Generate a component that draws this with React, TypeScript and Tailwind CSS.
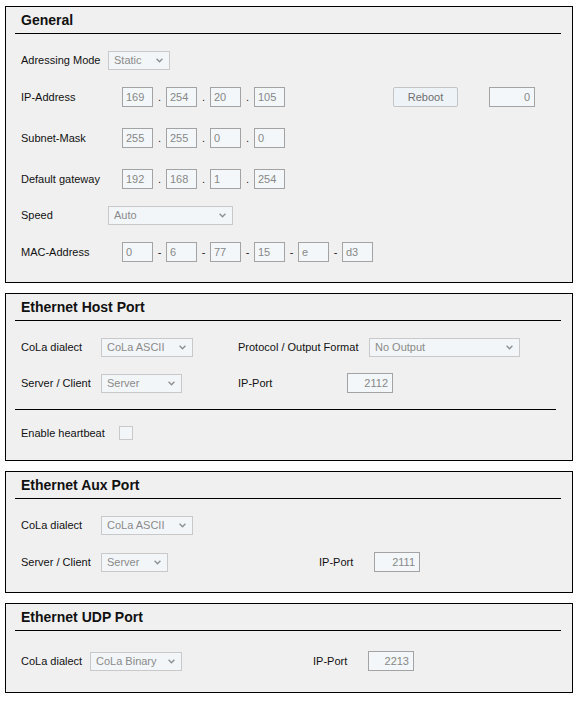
import React from "react";

const Chevron = () => (
  <svg width="7" height="5" viewBox="0 0 7 5" className="shrink-0">
    <path d="M0.6 0.8 L3.5 3.8 L6.4 0.8" fill="none" stroke="#8f8f8f" strokeWidth="1.4" />
  </svg>
);

const Select = ({ value, className }: { value: string; className: string }) => (
  <div
    className={`h-[19px] flex items-center justify-between pl-[5px] pr-[6px] border border-[#c9c9c9] bg-[#f3f6f9] text-[#8a8a8a] ${className}`}
  >
    <span className="leading-none">{value}</span>
    <Chevron />
  </div>
);

const Box = ({ value, className, right }: { value: string; className: string; right?: boolean }) => (
  <div
    className={`h-[20px] flex items-center border border-[#a3a3a3] bg-[#f3f7fa] text-[#888888] ${
      right ? "justify-end pr-[4px]" : "pl-[3px]"
    } ${className}`}
  >
    <span className="leading-none">{value}</span>
  </div>
);

const Sep = ({ ch }: { ch: string }) => (
  <div className="w-[13px] text-center text-[#222] leading-none">{ch}</div>
);

const Multi = ({ values, sep }: { values: string[]; sep: string }) => (
  <div className="flex items-center">
    {values.map((v, i) => (
      <React.Fragment key={i}>
        {i > 0 && <Sep ch={sep} />}
        <Box value={v} className="w-[31px]" />
      </React.Fragment>
    ))}
  </div>
);

const Panel = ({ title, children, className }: { title: string; children: React.ReactNode; className?: string }) => (
  <div className={`ml-[5px] w-[568px] border border-black bg-[#f0f0f0] ${className ?? ""}`}>
    <div className="ml-[9px] mr-[11px] h-[27px] flex items-center pl-[6px] border-b border-black">
      <span className="text-[14px] font-bold text-[#111] leading-none">{title}</span>
    </div>
    {children}
  </div>
);

const Label = ({ text, className }: { text: string; className: string }) => (
  <div className={`shrink-0 text-[#111] leading-none ${className}`}>{text}</div>
);

export default function App() {
  return (
    <div className="min-h-[703px] w-[581px] bg-white pt-[6px] font-['Liberation_Sans',Arial,sans-serif] text-[11px]">
      <Panel title="General">
        <div className="pl-[15px] pb-[20px]">
          <div className="mt-[16px] h-[20px] flex items-center">
            <Label text="Adressing Mode" className="w-[87px]" />
            <Select value="Static" className="w-[62px]" />
          </div>
          <div className="mt-[17px] h-[20px] flex items-center">
            <Label text="IP-Address" className="w-[101px]" />
            <Multi values={["169", "254", "20", "105"]} sep="." />
            <div className="ml-[108px] w-[65px] h-[20px] flex items-center justify-center rounded-[2px] border border-[#c4c4c4] bg-[#eef3f7] text-[#707070]">
              Reboot
            </div>
            <Box value="0" right className="ml-[31px] w-[46px]" />
          </div>
          <div className="mt-[21px] h-[20px] flex items-center">
            <Label text="Subnet-Mask" className="w-[101px]" />
            <Multi values={["255", "255", "0", "0"]} sep="." />
          </div>
          <div className="mt-[21px] h-[20px] flex items-center">
            <Label text="Default gateway" className="w-[101px]" />
            <Multi values={["192", "168", "1", "254"]} sep="." />
          </div>
          <div className="mt-[16px] h-[20px] flex items-center">
            <Label text="Speed" className="w-[87px]" />
            <Select value="Auto" className="w-[125px]" />
          </div>
          <div className="mt-[17px] h-[20px] flex items-center">
            <Label text="MAC-Address" className="w-[101px]" />
            <Multi values={["0", "6", "77", "15", "e", "d3"]} sep="-" />
          </div>
        </div>
      </Panel>

      <Panel title="Ethernet Host Port" className="mt-[10px]">
        <div className="pb-[17px]">
          <div className="pl-[15px] mt-[16px] h-[20px] flex items-center">
            <Label text="CoLa dialect" className="w-[80px]" />
            <div className="w-[137px] shrink-0">
              <Select value="CoLa ASCII" className="w-[92px]" />
            </div>
            <Label text="Protocol / Output Format" className="w-[131px]" />
            <Select value="No Output" className="w-[151px]" />
          </div>
          <div className="pl-[15px] mt-[16px] h-[20px] flex items-center">
            <Label text="Server / Client" className="w-[80px]" />
            <div className="w-[137px] shrink-0">
              <Select value="Server" className="w-[81px]" />
            </div>
            <Label text="IP-Port" className="w-[109px]" />
            <Box value="2112" right className="w-[46px]" />
          </div>
          <div className="ml-[9px] mt-[16px] w-[541px] h-px bg-black" />
          <div className="pl-[15px] mt-[13px] h-[20px] flex items-center">
            <Label text="Enable heartbeat" className="w-[98px]" />
            <div className="w-[14px] h-[14px] border border-[#c9c9c9] bg-[#f3f6f9]" />
          </div>
        </div>
      </Panel>

      <Panel title="Ethernet Aux Port" className="mt-[10px]">
        <div className="pl-[15px] pb-[20px]">
          <div className="mt-[16px] h-[20px] flex items-center">
            <Label text="CoLa dialect" className="w-[80px]" />
            <Select value="CoLa ASCII" className="w-[92px]" />
          </div>
          <div className="mt-[17px] h-[20px] flex items-center">
            <Label text="Server / Client" className="w-[80px]" />
            <div className="w-[218px] shrink-0">
              <Select value="Server" className="w-[67px]" />
            </div>
            <Label text="IP-Port" className="w-[55px]" />
            <Box value="2111" right className="w-[46px]" />
          </div>
        </div>
      </Panel>

      <Panel title="Ethernet UDP Port" className="mt-[10px]">
        <div className="pl-[15px] pb-[21px]">
          <div className="mt-[20px] h-[20px] flex items-center">
            <Label text="CoLa dialect" className="w-[69px]" />
            <div className="w-[223px] shrink-0">
              <Select value="CoLa Binary" className="w-[92px]" />
            </div>
            <Label text="IP-Port" className="w-[55px]" />
            <Box value="2213" right className="w-[46px]" />
          </div>
        </div>
      </Panel>
    </div>
  );
}
